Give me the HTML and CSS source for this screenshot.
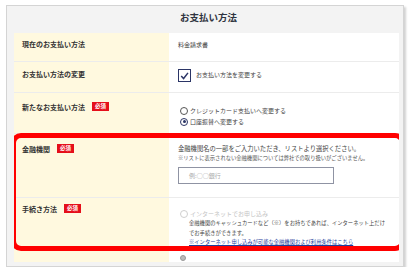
FILE: index.html
```html
<!DOCTYPE html>
<html lang="ja">
<head>
<meta charset="utf-8">
<link rel="stylesheet" href="styles.css">
</head>
<body>
<div class="panel">
  <h1 class="title">お支払い方法</h1>
  <div class="table">
    <div class="row r1">
      <div class="label">現在のお支払い方法</div>
      <div class="value">料金請求書</div>
    </div>
    <div class="row r2">
      <div class="label">お支払い方法の変更</div>
      <div class="value check-line">
        <span class="checkbox"><svg viewBox="0 0 12 12" width="12" height="12"><path d="M2.4 6 L5 8.8 L9.8 2.6" fill="none" stroke="#2b3566" stroke-width="1.6"/></svg></span>
        <span>お支払い方法を変更する</span>
      </div>
    </div>
    <div class="row r3">
      <div class="label">新たなお支払い方法<span class="badge">必須</span></div>
      <div class="value radios">
        <div class="radio-line"><span class="radio"></span>クレジットカード支払いへ変更する</div>
        <div class="radio-line"><span class="radio on"></span>口座振替へ変更する</div>
      </div>
    </div>
    <div class="highlight">
      <div class="row r4">
        <div class="label">金融機関<span class="badge">必須</span></div>
        <div class="value">
          <p class="lead">金融機関名の一部をご入力いただき、リストより選択ください。</p>
          <p class="note">※リストに表示されない金融機関については弊社での取り扱いがございません。</p>
          <div class="input">例:○○銀行</div>
        </div>
      </div>
      <div class="row r5">
        <div class="label">手続き方法<span class="badge">必須</span></div>
        <div class="value">
          <div class="radio-line disabled"><span class="radio"></span>インターネットでお申し込み</div>
          <p class="desc">金融機関のキャッシュカードなど（※）をお持ちであれば、インターネット上だけ<br>でお手続きができます。</p>
          <a class="link">※インターネット申し込みが可能な金融機関および利用条件はこちら</a>
        </div>
      </div>
    </div>
    <div class="row r6">
      <div class="label"></div>
      <div class="value"><span class="radio grey"></span></div>
    </div>
  </div>
</div>
</body>
</html>
```

FILE: styles.css
```css
* { box-sizing: border-box; }
html, body { margin: 0; padding: 0; background: #fff; }
body {
  font-family: "Noto Sans CJK JP", "Noto Sans", sans-serif;
  color: #333;
}
.panel {
  margin: 5px 0 0 6px;
  width: 398px;
  height: 262px;
  background: #f3f3f3;
  border: 1px solid #d4d4d4;
  box-shadow: 2px 2px 2px rgba(0,0,0,0.18);
  padding: 0 4px 4px 7px;
  display: flex;
  flex-direction: column;
}
.title {
  margin: 0;
  height: 27px;
  font-size: 9.5px;
  line-height: 23px;
  font-weight: bold;
  text-align: center;
  color: #2f3440;
  padding-left: 4px;
}
.table {
  flex: 1;
  overflow: hidden;
}
.highlight {
  position: relative;
}
.highlight::after {
  content: "";
  position: absolute;
  left: -3px;
  right: -6px;
  top: -1px;
  bottom: 0px;
  border: 5px solid #ff0000;
  border-radius: 10px;
  pointer-events: none;
}
.row {
  display: grid;
  grid-template-columns: 155px 1fr;
  border-bottom: 1px solid #ececec;
}
.label {
  background: #fff9df;
  padding: 6px 0 0 8px;
  font-size: 7px;
  line-height: 10px;
  font-weight: bold;
  color: #333;
  display: flex;
  align-items: flex-start;
}
.value {
  background: #fff;
  padding: 6px 0 0 9px;
  font-size: 6px;
  line-height: 10px;
  color: #444;
}
.r1 { height: 29px; }
.r1 .value { padding-top: 7px; }
.r2 { height: 31px; }
.r2 .label { padding-top: 7px; }
.r3 { height: 41px; }
.r3 .label { padding-top: 9px; }
.r3 .value { padding-top: 12px; }
.r4 { height: 64px; }
.r4 .label { padding-top: 10px; }
.r4 .value { padding-top: 10px; }
.r5 { height: 53px; border-bottom: none; }
.r5 .label { padding-top: 6px; }
.r5 .value { padding-top: 10px; }
.r6 { height: 30px; }
.r6 .value { padding-top: 3px; }
.badge {
  display: inline-block;
  margin-left: 7px;
  background: #e50f1a;
  color: #fff;
  font-size: 5.5px;
  line-height: 9px;
  height: 9px;
  padding: 0 3px;
  font-weight: bold;
}
.check-line {
  display: flex;
  align-items: flex-start;
  gap: 5px;
  padding-top: 7px;
}
.check-line span:last-child { line-height: 12px; }
.checkbox {
  width: 13px;
  height: 13px;
  border: 1px solid #2b3566;
  background: #fff;
  display: flex;
  align-items: center;
  justify-content: center;
}
.radio-line {
  display: flex;
  align-items: center;
  gap: 2px;
  height: 11px;
  padding-left: 2px;
}
.radio {
  display: inline-block;
  width: 8px;
  height: 8px;
  border: 1px solid #555;
  border-radius: 50%;
  background: #fff;
  position: relative;
  flex: none;
}
.radio.on { border-color: #2b3566; }
.radio.on::after {
  content: "";
  position: absolute;
  left: 1.5px;
  top: 1.5px;
  width: 3px;
  height: 3px;
  border-radius: 50%;
  background: #2b3566;
}
.radio.grey { border-color: #999; background: #bbb; margin-left: 2px; width: 6px; height: 6px; }
.disabled { color: #c4c4c4; }
.disabled .radio { border-color: #cfcfcf; }
p { margin: 0; }
.lead { font-size: 6.3px; line-height: 10px; color: #444; }
.note { font-size: 5.3px; line-height: 8px; color: #555; }
.input {
  margin-top: 5px;
  width: 156px;
  height: 17px;
  border: 1px solid #8f93a3;
  background: #fff;
  color: #aaa;
  font-size: 6px;
  line-height: 15px;
  padding-left: 10px;
}
.desc {
  padding-left: 11px;
  font-size: 5.3px;
  line-height: 9.5px;
  color: #444;
  white-space: nowrap;
}
.link {
  display: block;
  padding-left: 11px;
  font-size: 5.3px;
  line-height: 9.5px;
  color: #1c3d9c;
  text-decoration: underline;
}
```
